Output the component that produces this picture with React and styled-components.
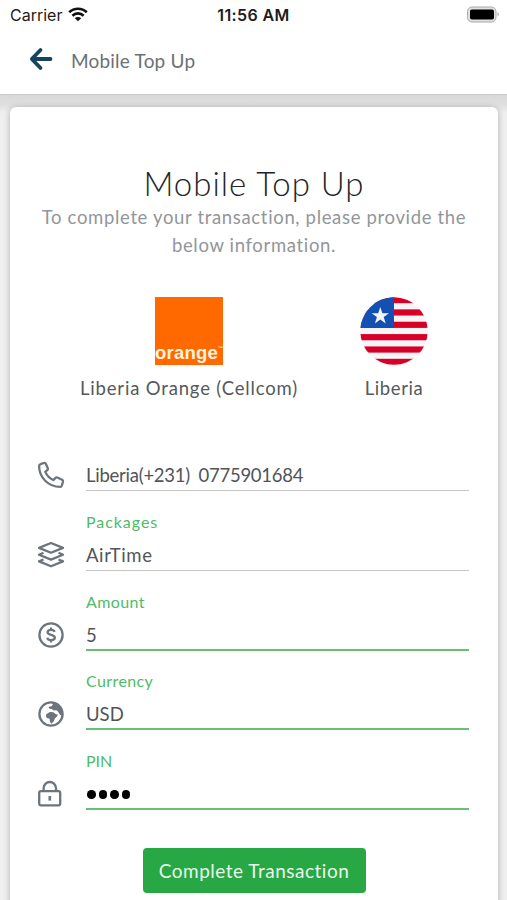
import React from "react";
import styled, { createGlobalStyle } from "styled-components";

const fields = [
  {
    icon: "phone",
    value: "Liberia(+231) 0775901684",
    spacing: -0.25,
    wordSpacing: 4,
  },
  {
    icon: "layers",
    label: "Packages",
    labelSpacing: 0.95,
    value: "AirTime",
    spacing: 0.6,
  },
  { icon: "dollar", label: "Amount", value: "5", active: true },
  { icon: "globe", label: "Currency", value: "USD", active: true },
  {
    icon: "lock",
    label: "PIN",
    labelSpacing: 0,
    value: "1234",
    active: true,
    secret: true,
  },
];

const FieldIcon = ({ name }) => (
  <Icon viewBox="0 0 28 28">
    {name === "phone" && (
      <path d="M3.600 3.200 6.800 2c.9-.3 1.600 0 2 .8l2 4.400c.3.7.2 1.300-.4 1.800L8.300 10.900c1.700 3.900 4.300 6.500 8.200 8.200l1.900-2.200c.5-.6 1.100-.7 1.800-.4l4.900 2.200c.8.4 1.100 1.100.9 1.900l-1.200 4c-.3.9-.9 1.300-1.700 1.300C11.300 25.900 2.100 16.500 2.100 5.100c0-.9.6-1.600 1.500-1.900z" />
    )}
    {name === "layers" && (
      <>
        <path d="M14 2 26 6.900 14 11.800 2 6.900z" />
        <path d="M6.500 11.800 2 13.700l12 4.900 12-4.900-4.500-1.900" />
        <path d="M6.500 18.500 2 20.400l12 4.900 12-4.900-4.500-1.900" />
      </>
    )}
    {name === "dollar" && (
      <>
        <circle cx="14" cy="14" r="11.600" />
        <path d="M17.600 10.900c-.4-1.300-1.800-2-3.500-2-2 0-3.500.9-3.500 2.400 0 3.500 7.200 1.600 7.200 5.200 0 1.600-1.600 2.600-3.700 2.600-2 0-3.500-.9-3.900-2.400M14 6.600v2.400M14 19v2.400" />
      </>
    )}
    {name === "globe" && (
      <>
        <circle cx="14" cy="14" r="11.600" />
        <path
          className="solid"
          d="M14.500 2.500c4.800 0 9.500 3 11 8.500l-.4 4.500-2-.5-1.900-3.200-1.700-1.600-2.800.3-1.500-1.300-3.200-.6-.3-1.500 3.200-1.100.9-1.400zM9.200 14.300l3.600-2.400 3.600.3 2.600 2 1.800.2-.8 2.200-2.200 1.800-.8 2.700-2.500 2.700-1.500-1.900-.4-3.200-2.700-.6-1-1.800z"
        />
      </>
    )}
    {name === "lock" && (
      <>
        <rect x="2.200" y="11.200" width="21" height="14.200" rx="1.800" />
        <path d="M6.600 11V8.200a6.200 6.200 0 0 1 12.400 0V11" />
        <path d="M12.800 16v4.600" strokeWidth="2.600" />
      </>
    )}
  </Icon>
);

const Field = ({
  icon,
  label,
  labelSpacing,
  value,
  active,
  secret,
  spacing,
  wordSpacing,
}) => (
  <FieldRow>
    <FieldIcon name={icon} />
    <FieldBody $active={active}>
      {label && <Label $spacing={labelSpacing}>{label}</Label>}
      {secret ? (
        <Dots>
          {value.split("").map((char, index) => (
            <Dot key={index} />
          ))}
        </Dots>
      ) : (
        <Value $active={active} $spacing={spacing} $wordSpacing={wordSpacing}>
          {value}
        </Value>
      )}
    </FieldBody>
  </FieldRow>
);

const App = () => (
  <>
    <GlobalStyle />
    <Screen>
      <StatusBar>
        <Carrier>
          Carrier
          <svg width="20" height="15" viewBox="0 0 20 15">
            <path
              d="M1.200 5.300a12.600 12.600 0 0 1 17.600 0M4.400 8.700a8 8 0 0 1 11.200 0"
              fill="none"
              stroke="#111"
              strokeWidth="2.600"
            />
            <path d="M6.800 11.200a4.600 4.600 0 0 1 6.400 0L10 14.300z" fill="#111" />
          </svg>
        </Carrier>
        <Time>11:56 AM</Time>
        <BatteryWrapper>
          <svg width="34" height="18" viewBox="0 0 34 18">
            <rect x="1.500" y="1" width="28.500" height="15" rx="4.500" fill="#e0e0e0" stroke="#a9a9a9" />
            <rect x="4" y="3.500" width="24" height="10" rx="1.800" />
            <path d="M31.500 6.200c1.800.6 1.800 3.600 0 4.200z" fill="#aaa" />
          </svg>
        </BatteryWrapper>
      </StatusBar>
      <Header>
        <svg width="24" height="24" viewBox="0 0 24 24">
          <path
            d="M11.500 3 2.800 12l8.700 9M3.500 12h18"
            fill="none"
            stroke="#154360"
            strokeWidth="3.800"
            strokeLinecap="round"
            strokeLinejoin="round"
          />
        </svg>
        <HeaderTitle>Mobile Top Up</HeaderTitle>
      </Header>
      <Content>
        <Card>
          <Title>Mobile Top Up</Title>
          <Subtitle>
            To complete your transaction, please provide the
            <br />
            below information.
          </Subtitle>
          <Providers>
            <Provider $width={238}>
              <OrangeLogo>
                <OrangeText>
                  orange<Mark>™</Mark>
                </OrangeText>
              </OrangeLogo>
              <ProviderName $spacing={0.83}>Liberia Orange (Cellcom)</ProviderName>
            </Provider>
            <Provider $width={172}>
              <Flag />
              <ProviderName $spacing={0.6}>Liberia</ProviderName>
            </Provider>
          </Providers>
          <Form>
            {fields.map((field) => (
              <Field key={field.icon} {...field} />
            ))}
          </Form>
          <Button>Complete Transaction</Button>
        </Card>
      </Content>
    </Screen>
  </>
);

const Flag = () => (
  <svg width="68" height="68" viewBox="0 0 68 68">
    <clipPath id="round">
      <circle cx="34" cy="34" r="33.700" />
    </clipPath>
    <g clipPath="url(#round)">
      <rect width="68" height="68" fill="#f5f4f6" />
      {[0, 1, 2, 3, 4, 5].map((stripe) => (
        <rect key={stripe} y={stripe * 12.36} width="68" height="6.180" fill="#d80027" />
      ))}
      <rect width="34" height="31" fill="#1450b3" />
      <path
        d="m20.300 10 2.100 6.200h6.600l-5.300 3.900 2 6.300-5.400-3.900-5.400 3.900 2-6.300-5.300-3.900h6.600z"
        fill="#f5f4f6"
      />
    </g>
  </svg>
);

export default App;

const GlobalStyle = createGlobalStyle`
  * {
    box-sizing: border-box;
  }
  body {
    margin: 0;
    overflow: hidden;
    font-family: Lato, "Liberation Sans", sans-serif;
    font-weight: 400;
    background-color: #fff;
  }
  svg {
    display: block;
    flex-shrink: 0;
  }
`;

const Screen = styled.div`
  width: 507px;
  height: 900px;
  display: flex;
  flex-direction: column;
  overflow: hidden;
`;

const StatusBar = styled.div`
  height: 30px;
  flex-shrink: 0;
  display: grid;
  grid-template-columns: 1fr auto 1fr;
  align-items: center;
  padding: 0 7px 1px 10px;
  font-family: Inter, sans-serif;
  font-size: 16px;
  color: #1c1c1c;
`;

const Carrier = styled.div`
  display: flex;
  align-items: center;
  gap: 6px;
`;

const Time = styled.div`
  margin-left: -3px;
  font-weight: 600;
  letter-spacing: 0.4px;
`;

const BatteryWrapper = styled.div`
  display: flex;
  justify-content: flex-end;
`;

const Header = styled.div`
  height: 65px;
  flex-shrink: 0;
  display: flex;
  align-items: center;
  padding: 0 0 6px 29px;
  gap: 18px;
  border-bottom: 1px solid #c9c9c9;
`;

const HeaderTitle = styled.div`
  padding-top: 3px;
  font-size: 19px;
  letter-spacing: 0.2px;
  color: #6c7072;
`;

const Content = styled.div`
  flex: 1;
  min-height: 0;
  padding: 12px 9px 0 10px;
  background: linear-gradient(#d9d9d9, #dedede 9px, #efefef 18px);
`;

const Card = styled.div`
  height: 830px;
  display: flex;
  flex-direction: column;
  align-items: center;
  padding-top: 56px;
  border-radius: 6px;
  background-color: #fff;
  box-shadow: 0 1px 6px rgba(0, 0, 0, 0.28);
`;

const Title = styled.h1`
  margin: 0;
  font-size: 33px;
  line-height: 40px;
  font-weight: 300;
  letter-spacing: 1px;
  color: #212529;
`;

const Subtitle = styled.p`
  margin: 0;
  font-size: 18.5px;
  line-height: 28px;
  letter-spacing: 0.66px;
  text-align: center;
  color: #92969a;
`;

const Providers = styled.div`
  display: flex;
  align-self: stretch;
  padding-left: 60px;
  margin-top: 38px;
`;

const Provider = styled.div`
  width: ${({ $width }) => $width}px;
  display: flex;
  flex-direction: column;
  align-items: center;
`;

const ProviderName = styled.div`
  margin-top: 9px;
  font-size: 18.5px;
  line-height: 28px;
  letter-spacing: ${({ $spacing }) => $spacing}px;
  white-space: nowrap;
  color: #55595d;
`;

const OrangeLogo = styled.div`
  width: 68px;
  height: 68px;
  display: flex;
  align-items: flex-end;
  background-color: #ff6900;
`;

const OrangeText = styled.div`
  display: flex;
  font-family: "Liberation Sans", sans-serif;
  font-size: 18.5px;
  line-height: 24px;
  font-weight: 700;
  letter-spacing: 0.2px;
  color: #fff4dc;
`;

const Mark = styled.span`
  font-size: 5px;
  line-height: 15px;
`;

const Form = styled.div`
  align-self: stretch;
  margin-top: 33px;
  padding: 0 29px 0 27px;
`;

const FieldRow = styled.div`
  height: 80px;
  display: flex;
  align-items: flex-end;
  gap: 21px;

  &:first-child {
    height: 56px;
  }
  &:nth-child(4) {
    height: 79px;
  }
`;

const Icon = styled.svg`
  width: 28px;
  height: 28px;
  margin-bottom: 2px;
  fill: none;
  stroke: #6c757d;
  stroke-width: 2.300;
  stroke-linejoin: round;

  .solid {
    fill: #6c757d;
    stroke: none;
  }
`;

const FieldBody = styled.div`
  flex: 1;
  border-bottom: ${({ $active }) =>
    $active ? "2px solid #6abf77" : "1px solid #c6c6c6"};
`;

const Label = styled.div`
  font-size: 16px;
  line-height: 20px;
  letter-spacing: ${({ $spacing = 0.4 }) => $spacing}px;
  color: #50bb67;
`;

const Value = styled.div`
  height: ${({ $active }) => ($active ? 37 : 38)}px;
  padding-top: 9px;
  font-size: 18.5px;
  line-height: 28px;
  letter-spacing: ${({ $spacing = 0 }) => $spacing}px;
  word-spacing: ${({ $wordSpacing = 0 }) => $wordSpacing}px;
  color: #515559;
`;

const Dots = styled.div`
  height: 37px;
  display: flex;
  align-items: center;
  gap: 3px;
  padding: 10px 0 0 1px;
`;

const Dot = styled.span`
  width: 8.500px;
  height: 8.500px;
  border-radius: 50%;
  background-color: #000;
`;

const Button = styled.button`
  width: 223px;
  height: 45px;
  flex-shrink: 0;
  margin-top: 38px;
  padding: 0;
  border: none;
  border-radius: 4px;
  background-color: #28a745;
  color: #e9f7ec;
  font-family: inherit;
  font-size: 19px;
  letter-spacing: 0.5px;
`;
